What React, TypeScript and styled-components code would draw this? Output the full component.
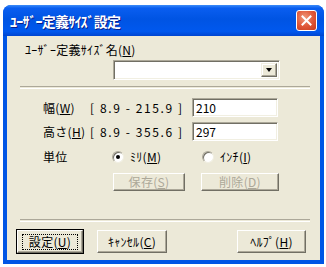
import React from "react";
import styled, { createGlobalStyle } from "styled-components";

const Global = createGlobalStyle`
  html, body { margin: 0; padding: 0; background: #ffffff; }
  body { font-family: "Noto Sans CJK JP", "Noto Sans", sans-serif; font-size: 12px; color: #000; }
`;

const Window = styled.div`
  margin: 5px 0 0 3px;
  width: 321px;
  display: flex;
  flex-direction: column;
  border-radius: 8px 8px 0 0;
  overflow: hidden;
  background: #0055e5;
`;

const TitleBar = styled.div`
  height: 31px;
  display: flex;
  align-items: center;
  justify-content: space-between;
  padding: 0 7px 0 7px;
  background: linear-gradient(
    #3c8cf8 0%,
    #0a5ef0 10%,
    #0054e3 45%,
    #0058ee 85%,
    #0045d0 100%
  );
`;

const Title = styled.span`
  color: #fff;
  font-weight: bold;
  font-size: 14px;
  letter-spacing: -0.8px;
  text-shadow: 1px 1px 0 #0a1e8a;
`;

const CloseBtn = styled.div`
  width: 21px;
  height: 21px;
  box-sizing: border-box;
  border: 1px solid #fff;
  border-radius: 3px;
  background: radial-gradient(circle at 40% 35%, #f09a7c 0%, #e0593a 50%, #c8391c 100%);
  display: flex;
  align-items: center;
  justify-content: center;
`;

const Body = styled.div`
  background: #ece9d8;
  margin: 0 4px 4px 4px;
  display: flex;
  flex-direction: column;
  padding-bottom: 7px;
`;

const Text = styled.span<{ $disabled?: boolean }>`
  font-size: 12px;
  line-height: 14px;
  letter-spacing: 0.3px;
  white-space: pre;
  color: ${(p) => (p.$disabled ? "#aca899" : "#000")};
  u { text-decoration: underline; }
`;

const Label = styled(Text)`
  margin: 7px 0 0 18px;
`;

const Combo = styled.div`
  margin: 3px 0 0 106px;
  width: 167px;
  height: 20px;
  box-sizing: border-box;
  background: #fff;
  border-top: 1px solid #aca899;
  border-left: 1px solid #aca899;
  border-right: 1px solid #fff;
  border-bottom: 1px solid #fff;
  box-shadow: inset 1px 1px 0 #716f64, inset -1px -1px 0 #f1efe2;
  display: flex;
  justify-content: flex-end;
  padding: 2px;
`;

const DropBtn = styled.div`
  width: 16px;
  height: 14px;
  box-sizing: border-box;
  background: #ece9d8;
  border-top: 1px solid #f1efe2;
  border-left: 1px solid #f1efe2;
  border-right: 1px solid #716f64;
  border-bottom: 1px solid #716f64;
  box-shadow: inset -1px -1px 0 #aca899, inset 1px 1px 0 #fff;
  display: flex;
  align-items: center;
  justify-content: center;
  &::after {
    content: "";
    border-left: 3.5px solid transparent;
    border-right: 3.5px solid transparent;
    border-top: 4px solid #000;
  }
`;

const Separator = styled.div<{ $top: number }>`
  margin: ${(p) => p.$top}px 10px 0 13px;
  height: 1px;
  border-top: 1px solid #aca899;
  border-bottom: 1px solid #fff;
`;

const FormGrid = styled.div`
  margin: 9px 0 0 36px;
  display: grid;
  grid-template-columns: 47px 102px 86px;
  grid-template-rows: 19px 19px 18px;
  row-gap: 5px;
  align-items: center;
  & > :nth-child(n + 7) { margin-top: 3px; }
`;

const Range = styled(Text)`
  letter-spacing: 1.6px;
`;

const Input = styled.div`
  height: 19px;
  box-sizing: border-box;
  background: #fff;
  border-top: 1px solid #aca899;
  border-left: 1px solid #aca899;
  border-right: 1px solid #fff;
  border-bottom: 1px solid #fff;
  box-shadow: inset 1px 1px 0 #716f64, inset -1px -1px 0 #f1efe2;
  padding: 2px 0 0 3px;
  font-size: 12px;
  line-height: 14px;
`;

const RadioItem = styled.label<{ $indent: number }>`
  display: flex;
  align-items: center;
  gap: 6px;
  padding-left: ${(p) => p.$indent}px;
`;

const RadioCircle = styled.span<{ $checked?: boolean }>`
  width: 12px;
  height: 12px;
  box-sizing: border-box;
  border-radius: 50%;
  background: #fff;
  border: 1px solid;
  border-color: #aca899 #f1efe2 #f1efe2 #aca899;
  box-shadow: inset 1px 1px 0 #716f64;
  display: flex;
  align-items: center;
  justify-content: center;
  &::after {
    content: "";
    width: 4px;
    height: 4px;
    border-radius: 50%;
    background: ${(p) => (p.$checked ? "#000" : "transparent")};
  }
`;

const ButtonRow = styled.div<{ $top: number; $left: number }>`
  display: flex;
  margin: ${(p) => p.$top}px 0 0 ${(p) => p.$left}px;
`;

const Button = styled.div<{ $w: number; $h: number; $gap?: number; $default?: boolean }>`
  width: ${(p) => p.$w}px;
  height: ${(p) => p.$h}px;
  margin-left: ${(p) => p.$gap ?? 0}px;
  box-sizing: border-box;
  background: #ece9d8;
  border-top: 1px solid #fff;
  border-left: 1px solid #fff;
  border-right: 1px solid #716f64;
  border-bottom: 1px solid #716f64;
  box-shadow: inset -1px -1px 0 #aca899;
  display: flex;
  align-items: center;
  justify-content: center;
  outline: ${(p) => (p.$default ? "1px solid #000" : "none")};
  outline-offset: 0;
`;

const FocusRect = styled.span`
  border: 1px dotted #000;
  padding: 0 6px;
  display: flex;
`;

export default function App() {
  return (
    <>
      <Global />
      <Window>
        <TitleBar>
          <Title>ﾕｰｻﾞｰ定義ｻｲｽﾞ設定</Title>
          <CloseBtn>
            <svg width="11" height="11" viewBox="0 0 11 11">
              <path d="M1.5 1.5 L9.5 9.5 M9.5 1.5 L1.5 9.5" stroke="#fff" strokeWidth="2" strokeLinecap="square" />
            </svg>
          </CloseBtn>
        </TitleBar>
        <Body>
          <Label>
            ﾕｰｻﾞｰ定義ｻｲｽﾞ名(<u>N</u>)
          </Label>
          <Combo>
            <DropBtn />
          </Combo>
          <Separator $top={6} />
          <FormGrid>
            <Text>
              幅(<u>W</u>)
            </Text>
            <Range>[ 8.9 - 215.9 ]</Range>
            <Input>210</Input>
            <Text>
              高さ(<u>H</u>)
            </Text>
            <Range>[ 8.9 - 355.6 ]</Range>
            <Input>297</Input>
            <Text>単位</Text>
            <RadioItem $indent={22}>
              <RadioCircle $checked />
              <Text>
                ﾐﾘ(<u>M</u>)
              </Text>
            </RadioItem>
            <RadioItem $indent={10}>
              <RadioCircle />
              <Text>
                ｲﾝﾁ(<u>I</u>)
              </Text>
            </RadioItem>
          </FormGrid>
          <ButtonRow $top={9} $left={106}>
            <Button $w={72} $h={18}>
              <Text $disabled>
                保存(<u>S</u>)
              </Text>
            </Button>
            <Button $w={78} $h={18} $gap={16}>
              <Text $disabled>
                削除(<u>D</u>)
              </Text>
            </Button>
          </ButtonRow>
          <Separator $top={28} />
          <ButtonRow $top={8} $left={10}>
            <Button $w={66} $h={23} $default>
              <FocusRect>
                <Text>
                  設定(<u>U</u>)
                </Text>
              </FocusRect>
            </Button>
            <Button $w={70} $h={23} $gap={14}>
              <Text>
                ｷｬﾝｾﾙ(<u>C</u>)
              </Text>
            </Button>
            <Button $w={69} $h={23} $gap={70}>
              <Text>
                ﾍﾙﾌﾟ(<u>H</u>)
              </Text>
            </Button>
          </ButtonRow>
        </Body>
      </Window>
    </>
  );
}
